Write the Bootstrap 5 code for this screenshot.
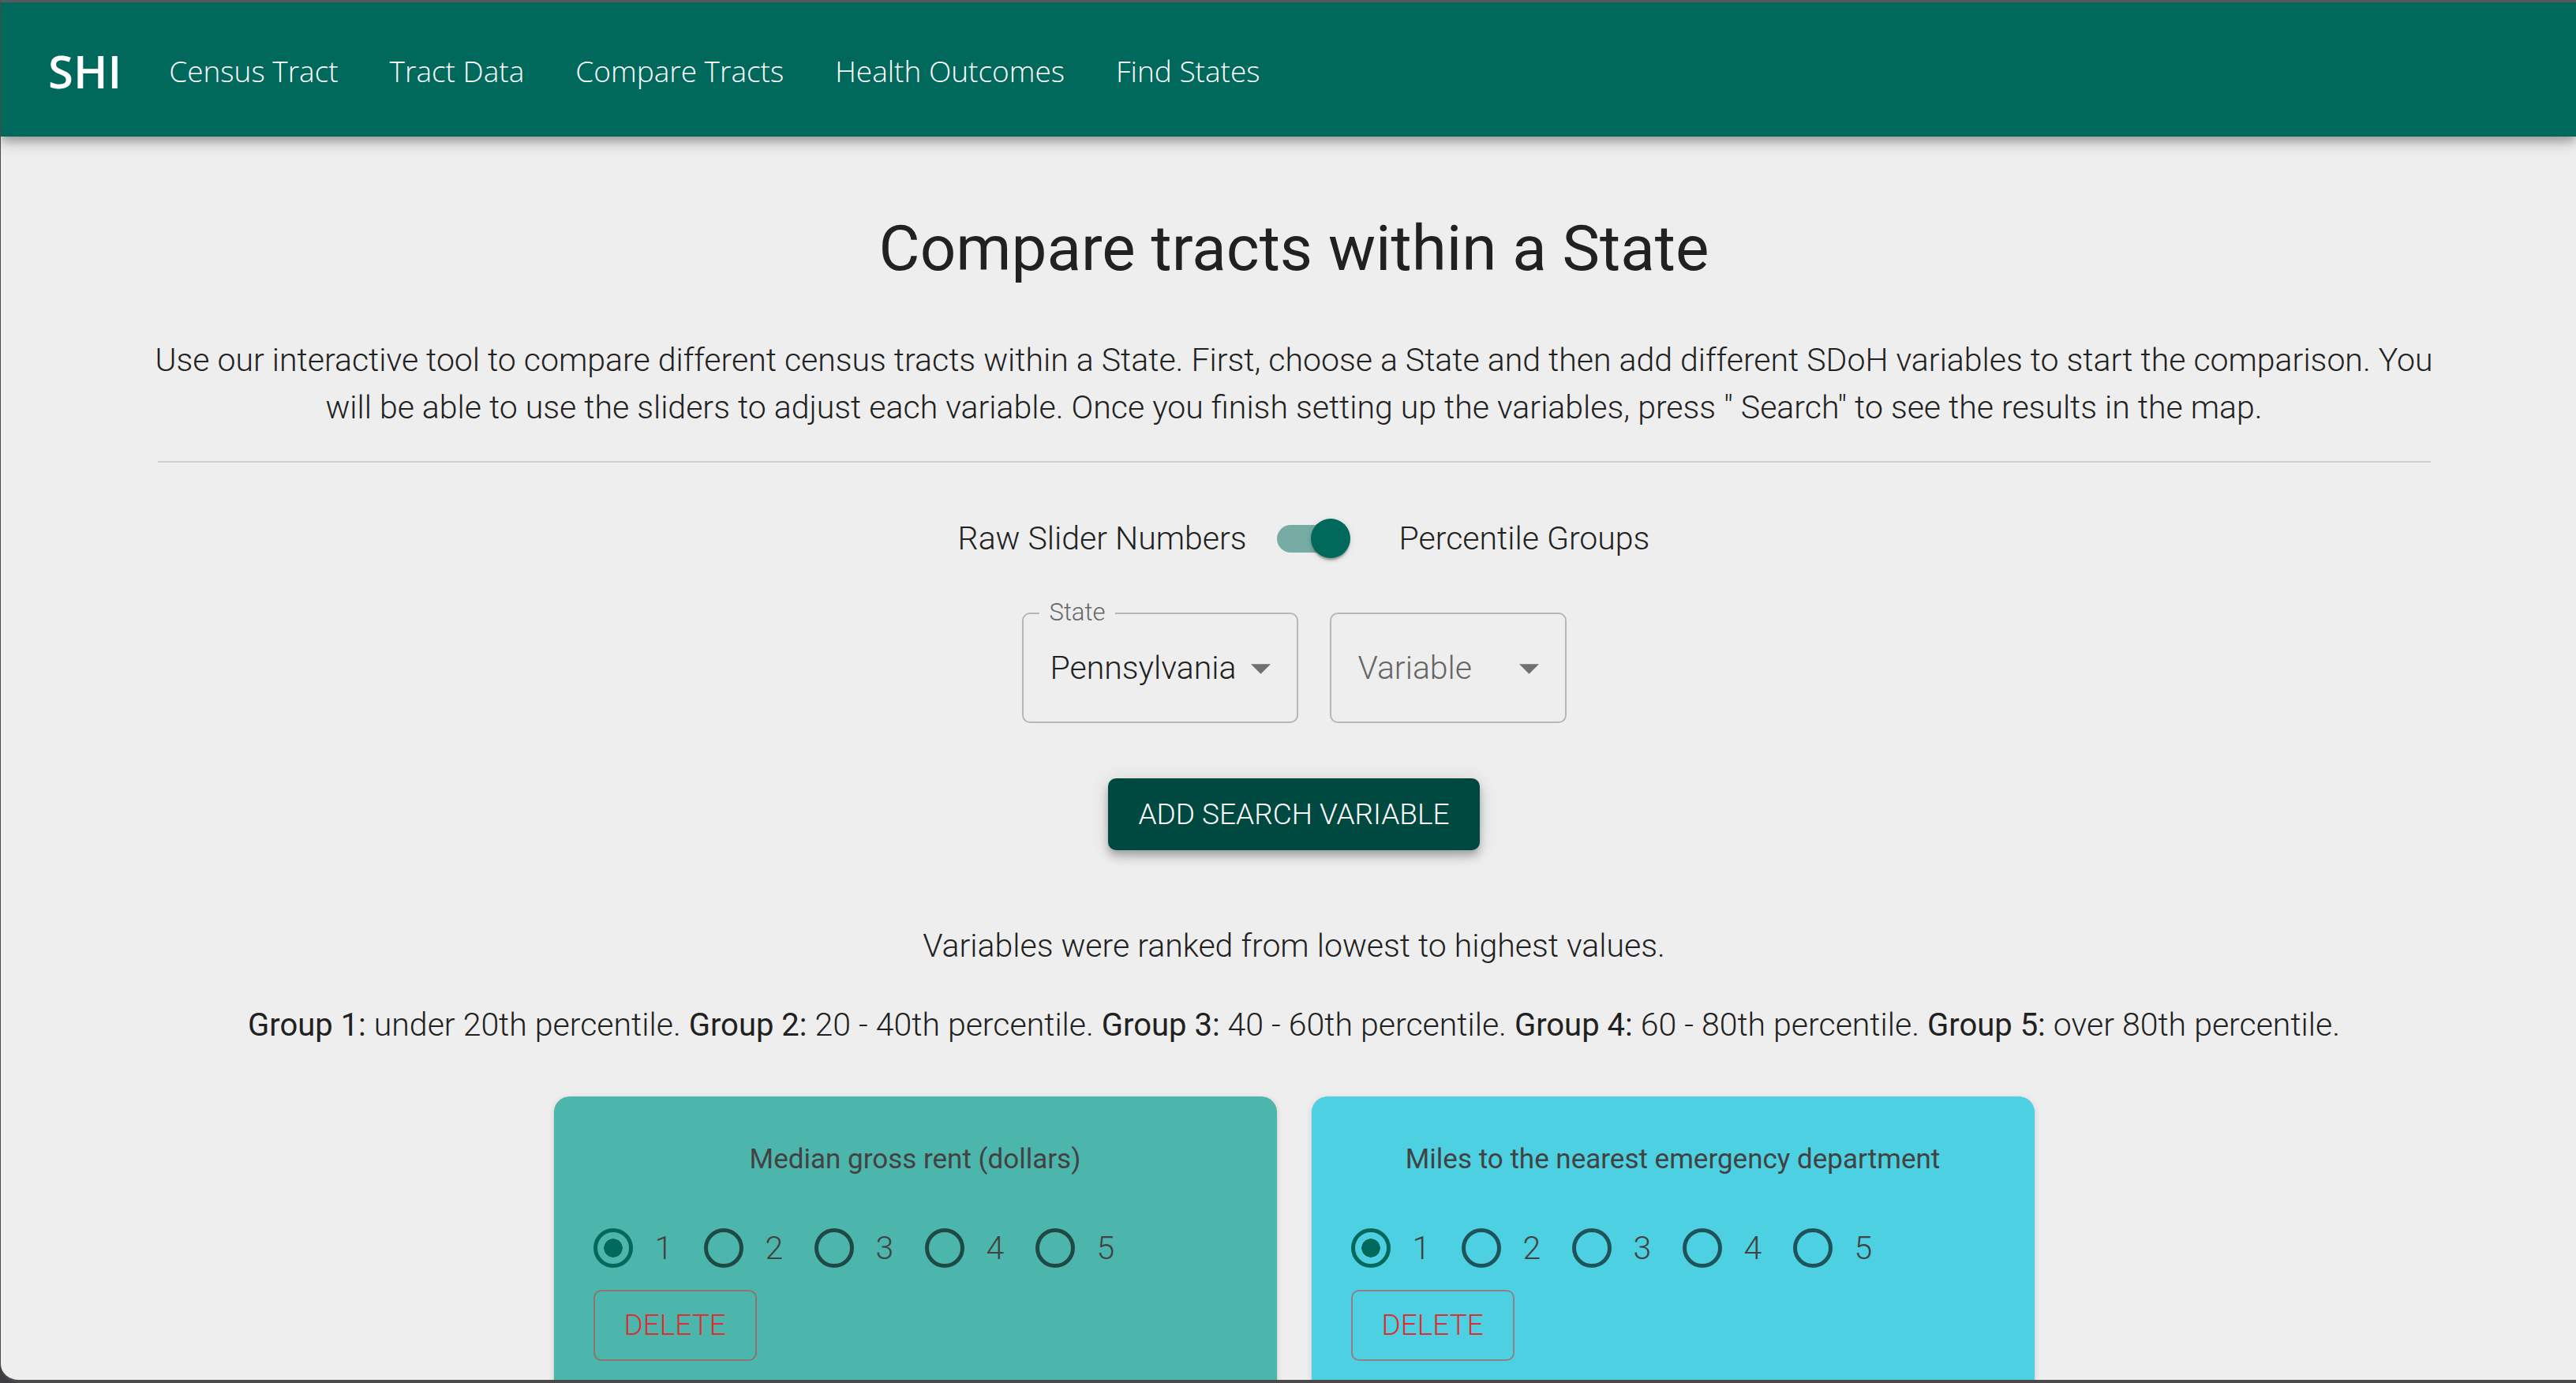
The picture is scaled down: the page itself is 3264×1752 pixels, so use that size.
<!DOCTYPE html>
<html lang="en">
<head>
<meta charset="utf-8">
<meta name="viewport" content="width=device-width, initial-scale=1">
<title>SHI - Compare Tracts</title>
<link href="https://cdn.jsdelivr.net/npm/bootstrap@5.3.0/dist/css/bootstrap.min.css" rel="stylesheet">
<style>
  :root { --teal: #00695c; --page: #eeeeee; --ink: #212121; }
  body { background: #3e3e40; font-family: Roboto, "Noto Sans", sans-serif; font-size: 41px; font-weight: 300; line-height: 60px; color: var(--ink); }
  .window { background: var(--page); border: solid #4a4a4a; border-width: 3px 0 4px 1px; border-top-color: #58585c; border-bottom-left-radius: 24px; }
  .topbar { background: var(--teal); padding: 4px 60px 0; height: 170px; flex: none; box-shadow: 0 5px 10px -2px rgba(0,0,0,.2), 0 10px 12px rgba(0,0,0,.14), 0 2px 25px rgba(0,0,0,.12); font-family: "Open Sans", "Noto Sans", sans-serif; z-index: 1; }
  .topbar .navbar-brand { font-size: 58px; font-weight: 600; line-height: 72px; margin: 0 52px 0 0; padding: 0; color: #fff; }
  .topbar .navbar-nav { gap: 49px; }
  .topbar .nav-link { font-size: 37px; font-weight: 300; color: #fff; }
  .page-main { padding-left: 14px; }
  .sheet { max-width: 2880px; padding-top: 90px; }
  .page-title { font-size: 80px; line-height: 105px; font-weight: 400; margin-bottom: 58px; }
  .intro { margin: 0 -10px; }
  .rule { border-top: 2px solid #cfcfcf; opacity: 1; margin: 38px 0 66px; }
  .mode-row { gap: 38px; padding-left: 25px; margin-bottom: 64px; }
  .mode-switch { width: 93px; height: 50px; margin: 0; border: 0; border-radius: 0; background: none !important; display: flex; align-items: center; position: relative; box-shadow: none !important; float: none; }
  .mode-switch::before { content: ""; width: 85px; height: 35px; border-radius: 18px; background: rgba(0,105,92,.5); }
  .mode-switch::after { content: ""; position: absolute; right: 0; top: 0; width: 50px; height: 50px; border-radius: 50%; background: var(--teal); box-shadow: 0 5px 3px -2px rgba(0,0,0,.2), 0 2px 2px rgba(0,0,0,.14), 0 2px 8px rgba(0,0,0,.12); }
  .picker { position: relative; }
  .picker select { appearance: none; height: 140px; border: 2px solid #b7b7b7; border-radius: 10px; background: none; padding: 0 34px; font-size: 41px; line-height: 60px; font-weight: 300; color: var(--ink); }
  .picker svg { position: absolute; right: 35px; top: 65px; width: 25px; height: 13px; pointer-events: none; }
  .picker label { position: absolute; left: 22px; top: -20px; padding: 0 13px; background: var(--page); font-size: 31px; line-height: 40px; color: #666; }
  .state-pick { width: 350px; }
  .var-pick { width: 300px; }
  .var-pick select { color: #666; }
  .btn-caps { font-size: 37px; line-height: 61px; font-weight: 300; text-transform: uppercase; border-radius: 10px; }
  .btn-add { background: #004940; color: #fff; border: 0; padding: 15px 38px; margin: 70px 0 91px; box-shadow: 0 5px 10px -2px rgba(0,0,0,.2), 0 10px 12px rgba(0,0,0,.14), 0 2px 25px rgba(0,0,0,.12); }
  .btn-del { color: #dc2f2f; border: 2px solid rgba(211,47,47,.5); padding: 12px 37px 13px; }
  .note { margin-bottom: 40px; }
  .note strong { font-size: 40px; font-weight: 400; }
  .var-list { gap: 44px; margin-top: 60px; }
  .var-card { width: 916px; height: 600px; border: 0; border-radius: 20px; padding: 50px; color: #424242; box-shadow: 0 5px 2px -4px rgba(0,0,0,.2), 0 2px 2px rgba(0,0,0,.14), 0 2px 8px rgba(0,0,0,.12); }
  .card-teal { background: #4db6ac; }
  .card-cyan { background: #4dd0e1; }
  .var-name { font-size: 35px; line-height: 60px; font-weight: 400; margin-bottom: 57px; text-align: center; }
  .choice { width: 140px; gap: 28px; }
  .choice input { appearance: none; width: 50px; height: 50px; margin: 0; border: 5px solid rgba(0,0,0,.6); border-radius: 50%; padding: 8px; background-clip: content-box; flex: none; }
  .choice input:checked { border-color: var(--teal); background: radial-gradient(circle closest-side, var(--teal) 96%, transparent) content-box; }
  .choices { border: 0; height: 50px; margin-bottom: 28px; }
</style>
<script src="https://cdn.jsdelivr.net/npm/bootstrap@5.3.0/dist/js/bootstrap.bundle.min.js"></script>
</head>
<body>
<div class="window vh-100 d-flex flex-column overflow-hidden">
  <nav class="topbar navbar navbar-expand">
    <a class="navbar-brand" href="#">SHI</a>
    <div class="navbar-nav">
      <a class="nav-link" href="#">Census Tract</a>
      <a class="nav-link" href="#">Tract Data</a>
      <a class="nav-link" href="#" aria-current="page">Compare Tracts</a>
      <a class="nav-link" href="#">Health Outcomes</a>
      <a class="nav-link" href="#">Find States</a>
    </div>
  </nav>
  <main class="page-main">
    <div class="sheet mx-auto text-center">
      <h1 class="page-title">Compare tracts within a State</h1>
      <p class="intro">Use our interactive tool to compare different census tracts within a State. First, choose a State and then add different SDoH variables to start the comparison. You will be able to use the sliders to adjust each variable. Once you finish setting up the variables, press " Search" to see the results in the map.</p>
      <hr class="rule">
      <div class="mode-row d-flex justify-content-center align-items-center">
        <label for="mode">Raw Slider Numbers</label>
        <input class="mode-switch form-check-input" type="checkbox" role="switch" id="mode" checked>
        <label class="ms-4" for="mode">Percentile Groups</label>
      </div>
      <div class="d-flex justify-content-center gap-4">
        <div class="picker state-pick me-3">
          <select class="w-100" id="state"><option>Pennsylvania</option></select>
          <label for="state">State</label>
          <svg viewBox="0 0 10 5" aria-hidden="true"><path d="M0 0l5 5 5-5z" fill="#707070"/></svg>
        </div>
        <div class="picker var-pick">
          <select class="w-100" aria-label="Variable"><option>Variable</option></select>
          <svg viewBox="0 0 10 5" aria-hidden="true"><path d="M0 0l5 5 5-5z" fill="#707070"/></svg>
        </div>
      </div>
      <button class="btn btn-caps btn-add" type="button">Add search variable</button>
      <p class="note">Variables were ranked from lowest to highest values.</p>
      <p class="note"><strong>Group 1:</strong> under 20th percentile. <strong>Group 2:</strong> 20 - 40th percentile. <strong>Group 3:</strong> 40 - 60th percentile. <strong>Group 4:</strong> 60 - 80th percentile. <strong>Group 5:</strong> over 80th percentile.</p>
      <div class="var-list d-flex justify-content-center text-start">
        <section class="card var-card card-teal">
          <h2 class="var-name">Median gross rent (dollars)</h2>
          <div class="choices d-flex" role="radiogroup" aria-label="Median gross rent (dollars)">
            <label class="choice d-flex align-items-center"><input type="radio" name="rent" checked>1</label>
            <label class="choice d-flex align-items-center"><input type="radio" name="rent">2</label>
            <label class="choice d-flex align-items-center"><input type="radio" name="rent">3</label>
            <label class="choice d-flex align-items-center"><input type="radio" name="rent">4</label>
            <label class="choice d-flex align-items-center"><input type="radio" name="rent">5</label>
          </div>
          <button class="btn btn-caps btn-del align-self-start" type="button">Delete</button>
        </section>
        <section class="card var-card card-cyan">
          <h2 class="var-name">Miles to the nearest emergency department</h2>
          <div class="choices d-flex" role="radiogroup" aria-label="Miles to the nearest emergency department">
            <label class="choice d-flex align-items-center"><input type="radio" name="miles" checked>1</label>
            <label class="choice d-flex align-items-center"><input type="radio" name="miles">2</label>
            <label class="choice d-flex align-items-center"><input type="radio" name="miles">3</label>
            <label class="choice d-flex align-items-center"><input type="radio" name="miles">4</label>
            <label class="choice d-flex align-items-center"><input type="radio" name="miles">5</label>
          </div>
          <button class="btn btn-caps btn-del align-self-start" type="button">Delete</button>
        </section>
      </div>
    </div>
  </main>
</div>
</body>
</html>
